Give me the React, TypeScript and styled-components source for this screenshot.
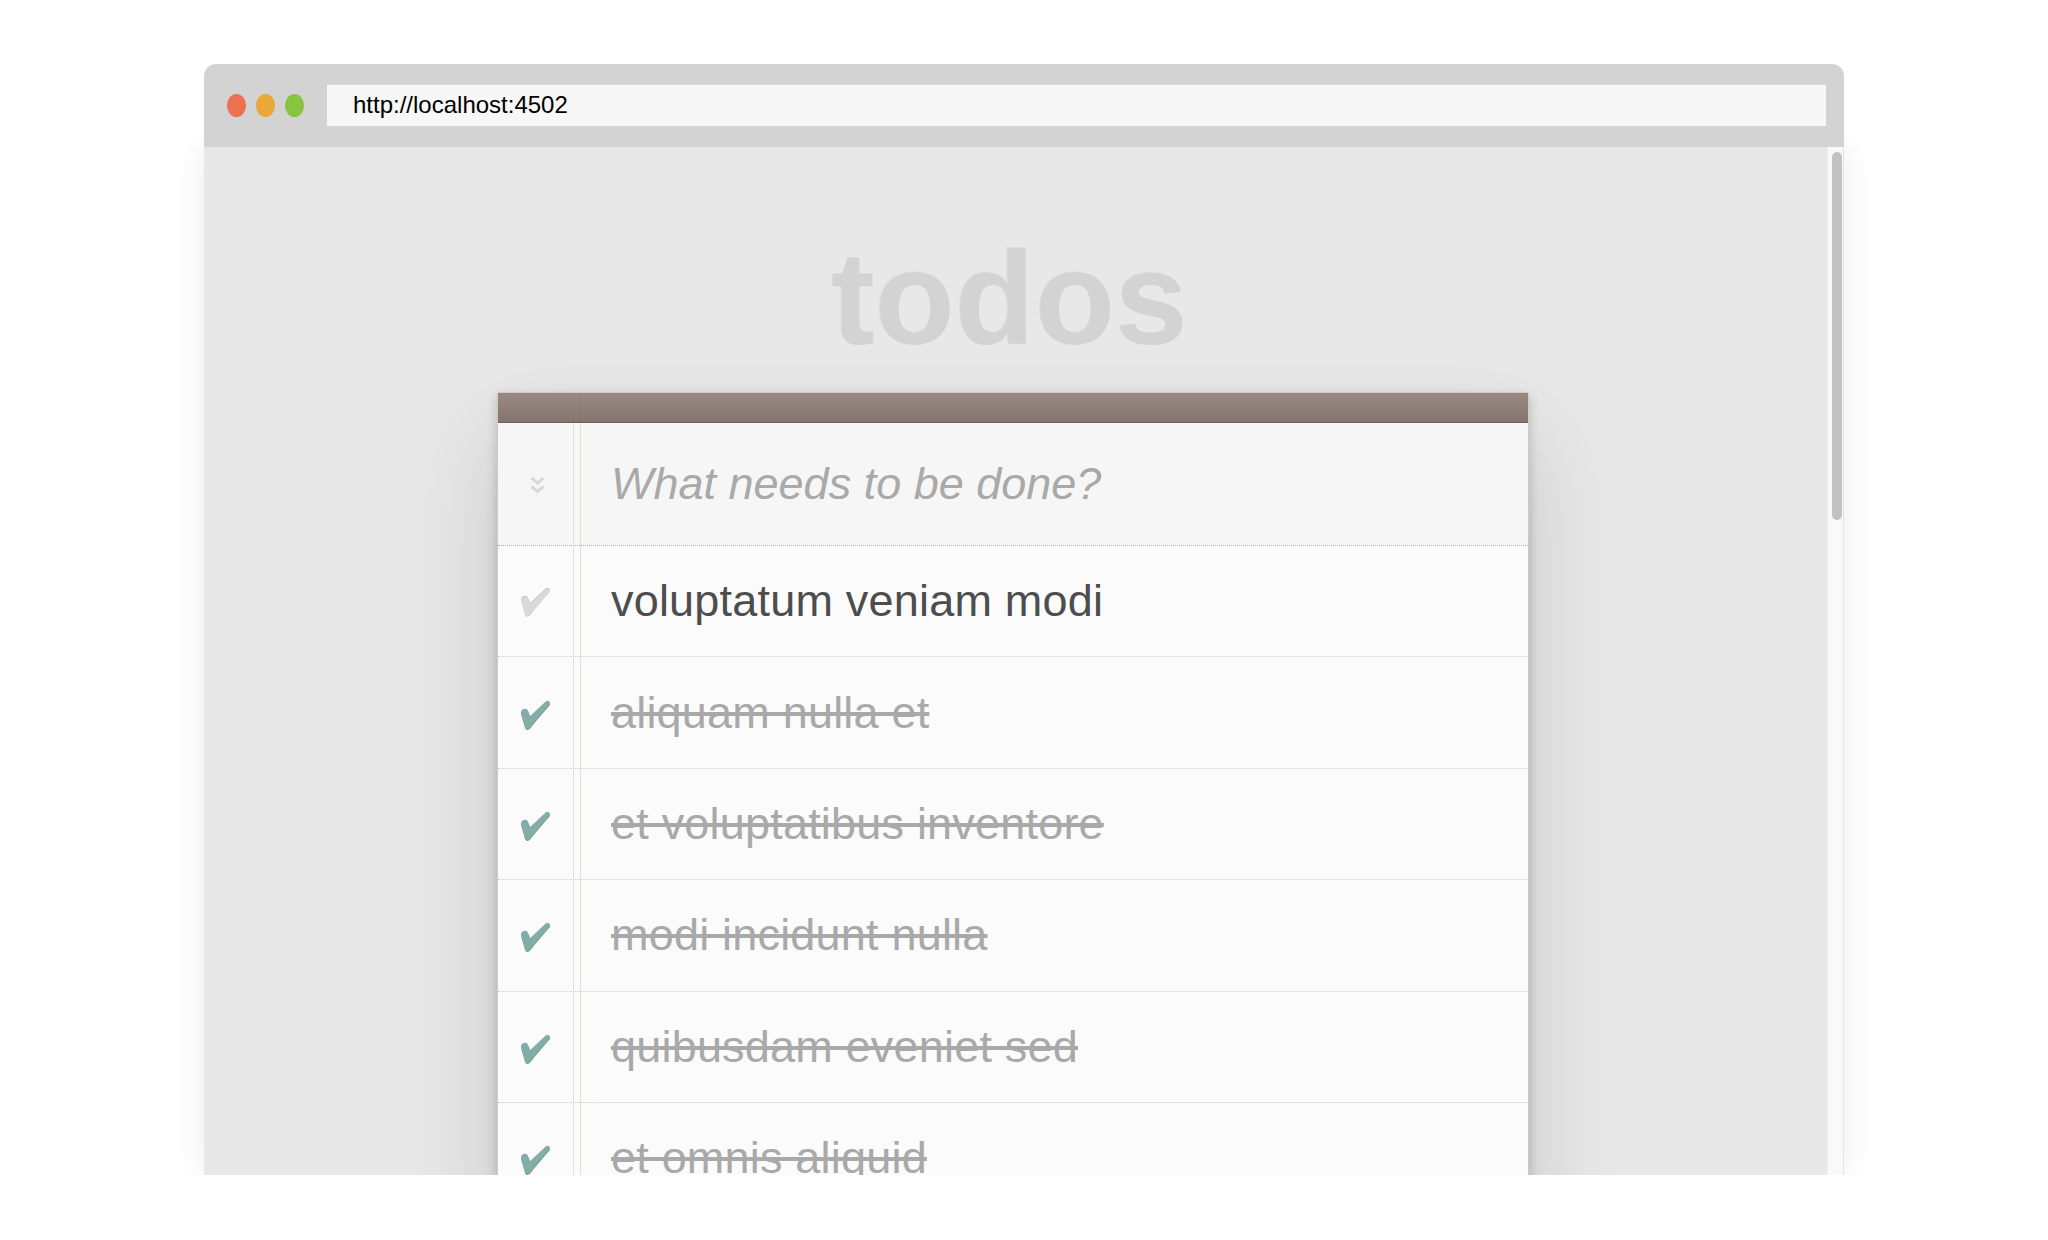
import React from "react";
import styled, { createGlobalStyle } from "styled-components";

const GlobalStyle = createGlobalStyle`
  html, body { margin: 0; padding: 0; background: #ffffff; }
  body { font-family: "Liberation Sans", Arial, Helvetica, sans-serif; }
  * { box-sizing: border-box; }
`;

const Page = styled.div`
  height: 1175px;
  overflow: hidden;
  padding: 64px 0 0 204px;
`;

const Window = styled.div`
  width: 1640px;
  display: flex;
  flex-direction: column;
`;

const TitleBar = styled.div`
  position: relative;
  z-index: 1;
  height: 83px;
  display: flex;
  align-items: center;
  padding: 0 18px 0 23px;
  background: #d3d3d3;
  border-radius: 12px 12px 0 0;
`;

const Lights = styled.div`
  display: flex;
  gap: 10px;
`;

const Light = styled.span<{ $color: string }>`
  display: block;
  width: 19px;
  height: 23px;
  border-radius: 50%;
  background: ${(p) => p.$color};
`;

const AddressBar = styled.div`
  flex: 1;
  margin-left: 23px;
  height: 41px;
  display: flex;
  align-items: center;
  padding: 0 0 2px 26px;
  background: #f7f7f7;
  font-size: 24px;
  color: #000000;
`;

const Viewport = styled.div`
  height: 1028px;
  display: flex;
  box-shadow: 0 0 30px rgba(0, 0, 0, 0.08);
`;

const Content = styled.div`
  flex: 1;
  overflow: hidden;
  background: #e8e8e8;
  padding-left: 293px;
  display: flex;
  flex-direction: column;
`;

const Track = styled.div`
  width: 17px;
  padding: 5px 0 0 4px;
  background: #f9f9f9;
  border-left: 1px solid #f0f0f0;
  border-right: 1px solid #e4e4e4;
`;

const Thumb = styled.div`
  width: 10px;
  height: 368px;
  border-radius: 5px;
  background: #c2c2c2;
`;

const Title = styled.h1`
  margin: 86px 0 0;
  width: 1032px;
  padding-right: 7px;
  font-size: 131px;
  line-height: 131px;
  font-weight: bold;
  text-align: center;
  color: #d3d3d3;
  text-shadow: -1px -1px 0 rgba(0, 0, 0, 0.05);
`;

const Card = styled.section`
  position: relative;
  margin-top: 28px;
  width: 1032px;
  flex-shrink: 0;
  background: #fbfbfb;
  border: 1px solid #cccccc;
  border-radius: 2px 2px 0 0;
  box-shadow: 0 4px 11px rgba(0, 0, 0, 0.2), 0 47px 94px rgba(0, 0, 0, 0.15);

  &::before {
    content: "";
    position: absolute;
    top: 0;
    bottom: 0;
    left: 75px;
    width: 6px;
    border-left: 1px solid #f5d6d6;
    border-right: 1px solid #f5d6d6;
  }
`;

const Strip = styled.div`
  position: relative;
  z-index: 1;
  height: 30px;
  background: linear-gradient(rgba(132, 110, 100, 0.8), rgba(101, 84, 76, 0.8));
  border-bottom: 1px solid #6c615c;
`;

const NewTodoRow = styled.div`
  height: 122px;
  display: flex;
  align-items: center;
  background: rgba(0, 0, 0, 0.02);
`;

const ToggleAllCell = styled.div`
  width: 75px;
  height: 100%;
  display: flex;
  align-items: center;
  justify-content: center;
  padding: 2px 0 0 4px;
`;

const NewTodoInput = styled.input`
  flex: 1;
  height: 60px;
  border: none;
  outline: none;
  background: transparent;
  padding: 0 0 0 38px;
  font-family: inherit;
  font-size: 45px;
  color: #4d4d4d;

  &::placeholder {
    font-style: italic;
    color: #a9a9a9;
  }
`;

const List = styled.ul`
  margin: 0;
  padding: 0;
  list-style: none;
  border-top: 1px dotted #adadad;
`;

const Item = styled.li`
  height: 111.4px;
  display: flex;
  align-items: center;
  border-bottom: 1px dotted #cccccc;
`;

const CheckCell = styled.div`
  width: 75px;
  display: flex;
  justify-content: center;
  padding-top: 4px;
`;

const Label = styled.label<{ $done: boolean }>`
  padding-left: 38px;
  font-size: 45px;
  line-height: 1.2;
  letter-spacing: 0.2px;
  white-space: pre;
  color: ${(p) => (p.$done ? "#a9a9a9" : "#4d4d4d")};
  text-decoration: ${(p) => (p.$done ? "line-through" : "none")};
`;

const CHECK_PATH =
  "M1,13 C1,9 6,7.5 8,10.5 L10.5,16.5 L26.5,1.5 C28.5,-0.5 32,1.5 30.5,4.5 C24,12 17,20 10.5,28.3 C8.8,30.4 6,30.2 5.2,27.8 Z";

const Check: React.FC<{ done: boolean }> = ({ done }) => {
  const fill = done ? "#85ada7" : "#d9d9d9";
  const shade = done ? "#6d9c95" : "#c4c4c4";
  return (
    <svg width="31" height="30" viewBox="0 0 32 31" aria-hidden="true">
      <path d={CHECK_PATH} fill={shade} transform={done ? "translate(0,1.2)" : "translate(0,-1)"} />
      <path d={CHECK_PATH} fill={fill} />
    </svg>
  );
};

const ToggleAllIcon: React.FC = () => (
  <svg width="17" height="19" viewBox="0 0 17 19" aria-hidden="true">
    <polyline points="2.5,2 8.5,7 14.5,2" fill="none" stroke="#d9d9d9" strokeWidth="3" strokeLinejoin="miter" />
    <polyline points="2.5,10.5 8.5,15.5 14.5,10.5" fill="none" stroke="#d9d9d9" strokeWidth="3" strokeLinejoin="miter" />
  </svg>
);

const todos = [
  { title: "voluptatum veniam modi", done: false },
  { title: "aliquam nulla et", done: true },
  { title: "et voluptatibus inventore", done: true },
  { title: "modi incidunt nulla", done: true },
  { title: "quibusdam eveniet sed", done: true },
  { title: "et omnis aliquid", done: true },
];

export default function App() {
  return (
    <>
      <GlobalStyle />
      <Page>
        <Window>
          <TitleBar>
            <Lights>
              <Light $color="#ec7150" />
              <Light $color="#e9a93a" />
              <Light $color="#89c43f" />
            </Lights>
            <AddressBar>http://localhost:4502</AddressBar>
          </TitleBar>
          <Viewport>
            <Content>
              <Title>todos</Title>
              <Card>
                <Strip />
                <NewTodoRow>
                  <ToggleAllCell>
                    <ToggleAllIcon />
                  </ToggleAllCell>
                  <NewTodoInput placeholder="What needs to be done?" readOnly />
                </NewTodoRow>
                <List>
                  {todos.map((t) => (
                    <Item key={t.title}>
                      <CheckCell>
                        <Check done={t.done} />
                      </CheckCell>
                      <Label $done={t.done}>{t.title}</Label>
                    </Item>
                  ))}
                </List>
              </Card>
            </Content>
            <Track>
              <Thumb />
            </Track>
          </Viewport>
        </Window>
      </Page>
    </>
  );
}
